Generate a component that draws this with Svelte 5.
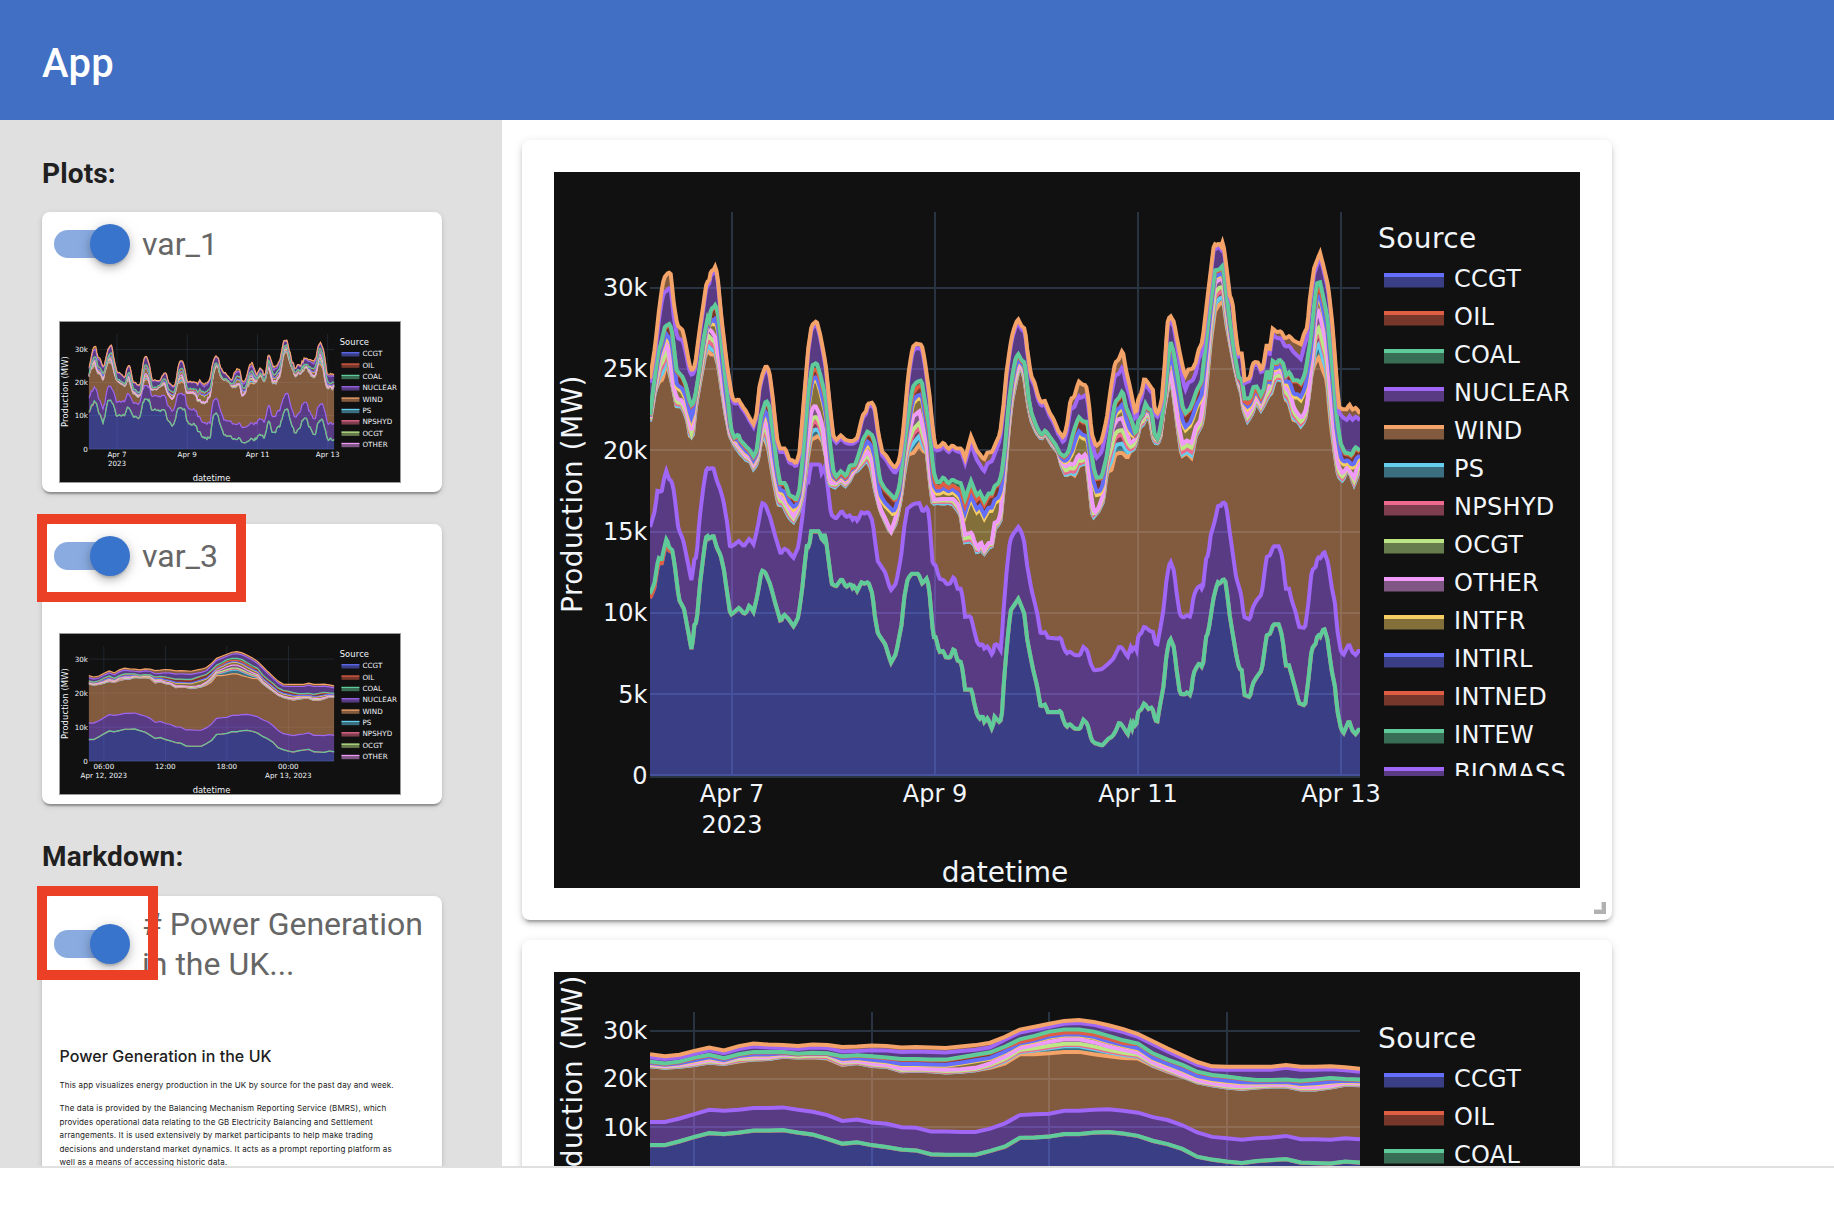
<script>
  const sources = [
    ['CCGT', '#636efa'], ['OIL', '#de5d43'], ['COAL', '#5fcb9a'], ['NUCLEAR', '#a066f5'],
    ['WIND', '#f4a369'], ['PS', '#65cdee'], ['NPSHYD', '#ed6a8f'], ['OCGT', '#bde787'],
    ['OTHER', '#f09bfa'], ['INTFR', '#f6ce64'], ['INTIRL', '#636efa'], ['INTNED', '#de5d43'],
    ['INTEW', '#5fcb9a'], ['BIOMASS', '#a066f5'], ['INTELEC', '#f4a369']
  ];

  // Parses "x,y x,y ..." into points, shifted by dx and dy.
  const seg = (text, dx = 0, dy = 0) =>
    text.trim().split(/\s+/).map((p) => {
      const [x, y] = p.split(',').map(Number);
      return [x + dx, y + dy];
    });

  function sample(points, x) {
    let i = 1;
    while (i < points.length - 1 && points[i][0] < x) i++;
    const [x0, y0] = points[i - 1];
    const [x1, y1] = points[i];
    if (x1 === x0) return y1;
    const t = Math.max(0, Math.min(1, (x - x0) / (x1 - x0)));
    return y0 + (y1 - y0) * t;
  }

  // Cumulative production curves for the week, in plot units.
  const wTotal = [
    ...seg('30,535 45,440 58,320 68,250 75,228 86,216 93,222 100,300 112,375 128,390 135,420 148,492 156,512 165,495 180,380 200,245 207,242 213,212 220,210 227,196 234,240 245,360 262,500 276,590 285,603 295,597 310,622 318,632 330,655 341,672 350,640 358,560 368,520 378,495 388,512 398,590 412,720 420,745 436,745 448,778 458,780 468,790 478,760 490,620 505,440 515,375 530,362 540,400 557,490 570,620 580,705 588,720 603,705 615,718 628,722 640,722 652,712 668,645 680,630 683,610 697,607 705,625 715,700 727,755 738,765 752,788 765,803 778,780 790,690 805,520 818,440 828,430 845,433 853,470 868,580 880,700 887,740 900,738 910,726 925,747 937,735 950,745 965,745 975,775 993,708 1010,750 1022,765 1032,778 1042,757 1056,755 1068,728'),
    ...seg('0,700 10,620 20,510 35,410 45,375 54,356 65,378 75,385 82,450 93,525 103,545 115,590 124,607 134,600 150,640 160,655 175,692 190,712 200,680 212,595 222,592 236,543 248,553 258,555 266,600 275,700 288,738 305,722 320,655 333,560 345,487 355,480 368,448 378,510 390,560 400,610 408,645 415,595 425,575 433,533 442,545 452,560 460,570 464,630 474,640 485,600 495,480 503,365 510,345 522,365 530,410 545,485 555,528 565,508 578,505 588,485 595,450 607,425 618,330 630,230 642,130 650,135 657,128 662,140 669,122 678,190 690,290 697,300 705,385 715,460 727,460 733,540 750,533 758,490 765,485 775,487 785,512 793,480 800,430 808,455 818,385 830,395 843,393 855,415 868,407 880,420 893,427 903,432 912,400 922,380 930,290 942,205 960,157 970,195 985,260 997,370 1007,500 1017,620 1028,627 1040,627 1048,612 1057,628 1068,622 1080,640', 1080)
  ];
  const wIntew = [
    ...seg('30,645 38,580 55,450 63,430 75,378 90,370 97,400 110,510 128,530 138,555 148,600 156,617 165,590 175,530 190,420 203,352 208,362 213,325 220,322 227,312 235,345 248,460 262,580 272,680 282,712 295,702 300,718 318,738 330,750 341,768 350,750 362,650 378,600 388,615 398,690 412,800 420,848 436,848 448,885 460,890 468,900 478,870 490,750 505,570 517,495 530,487 540,520 557,590 570,730 580,810 588,830 603,812 618,828 630,795 645,795 660,750 670,715 683,693 697,705 705,730 720,840 735,865 750,880 765,897 778,860 790,760 805,640 818,560 830,545 845,540 853,590 868,680 880,810 890,845 900,845 910,830 925,850 937,837 950,845 963,848 975,895 993,842 1010,885 1020,875 1033,903 1045,880 1055,880 1065,855 1075,850'),
    ...seg('2,830 5,820 15,740 25,620 35,540 45,480 54,460 65,480 75,487 85,590 95,640 110,680 124,705 136,690 150,710 165,730 180,760 193,768 205,755 215,715 225,680 236,650 248,662 262,665 270,720 280,800 290,832 305,830 320,770 333,680 345,605 357,592 368,570 378,620 395,660 408,705 415,660 430,640 435,607 445,625 455,630 463,700 474,718 485,660 495,580 505,470 511,422 520,450 535,540 548,620 556,638 570,625 580,600 590,570 605,542 615,450 630,320 645,210 657,208 669,195 680,290 692,380 705,470 716,530 727,540 733,595 750,595 760,560 770,558 783,585 793,560 800,510 810,540 818,482 830,490 838,477 850,490 858,525 868,515 880,540 893,540 903,548 915,520 930,430 943,310 950,250 960,245 970,290 982,350 997,500 1010,650 1022,730 1035,757 1050,760 1055,765 1065,740 1080,750', 1080)
  ];
  const wOther = [
    ...seg('30,655 45,560 60,475 70,455 80,425 90,480 100,560 112,598 125,602 138,625 148,665 156,700 165,600 178,530 190,450 203,385 215,395 227,415 240,500 255,610 270,700 283,725 300,745 318,768 330,775 341,795 352,770 365,690 375,660 385,700 400,800 418,890 430,898 447,925 460,950 475,920 488,860 500,740 515,630 525,617 535,635 548,680 560,780 572,850 588,850 603,838 618,850 630,830 645,810 660,785 683,755 695,775 707,860 720,925 735,955 753,995 768,950 780,890 795,760 810,690 820,650 838,635 850,690 862,740 872,840 882,900 910,898 940,898 955,915 965,945 975,1005 995,998 1005,1030 1015,1045 1022,1025 1033,1050 1045,1030 1055,1030 1063,970 1075,965'),
    ...seg('2,935 12,820 25,680 35,580 45,530 55,500 65,500 75,520 85,600 95,650 110,690 124,710 136,697 155,725 175,755 185,790 198,800 210,792 222,795 235,765 245,775 257,762 265,800 275,900 283,940 295,925 308,890 318,790 328,740 340,680 352,660 367,655 378,690 390,730 400,725 408,710 418,665 432,650 440,640 452,645 462,705 472,720 482,700 495,600 505,530 513,520 523,580 535,670 548,735 560,722 575,730 588,680 600,665 608,620 620,500 633,350 645,250 657,240 670,240 680,330 692,420 705,500 718,550 725,570 730,615 743,645 758,620 768,590 783,615 795,580 808,560 818,525 835,515 848,520 858,565 870,580 882,625 895,645 905,655 918,630 928,560 938,450 948,350 957,335 967,380 980,440 993,600 1005,730 1015,800 1028,822 1042,802 1050,815 1062,835 1072,800 1080,785', 1080)
  ];
  const wWind = [
    ...seg('30,665 45,575 58,545 68,540 78,490 88,520 98,560 110,620 125,620 140,655 150,710 158,712 168,620 180,550 195,470 203,450 213,465 225,465 235,500 245,570 258,650 270,710 283,735 300,760 318,780 330,785 341,808 352,790 362,730 372,710 385,750 400,840 415,915 430,918 445,950 460,968 475,940 488,890 500,800 512,720 525,715 535,708 548,725 558,770 568,855 585,863 603,845 615,860 628,845 640,820 655,810 668,795 680,780 692,805 705,870 720,930 735,965 752,1000 768,970 782,900 795,810 803,765 820,760 838,735 850,755 860,758 870,850 878,912 895,910 910,912 925,910 940,915 955,935 963,950 973,1028 990,1025 1003,1035 1012,1060 1022,1045 1032,1063 1045,1045 1055,1040 1065,985 1075,975'),
    ...seg('2,960 15,830 25,700 35,610 45,560 55,515 65,510 72,530 85,620 95,665 110,700 124,718 136,702 155,735 175,760 185,800 198,828 212,820 225,828 235,800 248,793 260,790 268,860 278,955 295,935 310,905 320,820 335,810 345,765 357,760 368,760 382,775 390,755 400,750 408,730 420,680 430,675 437,655 450,660 460,720 470,733 480,720 490,640 505,560 515,545 525,620 535,700 545,770 560,760 575,775 587,710 600,685 608,670 620,560 633,420 645,335 657,315 670,305 680,380 692,440 705,510 718,565 724,580 730,630 743,665 758,640 768,605 783,632 795,610 805,590 815,580 825,540 840,540 850,545 855,600 865,605 880,660 893,665 903,680 915,660 925,600 935,520 945,490 957,472 968,510 980,540 993,680 1005,770 1015,830 1028,843 1040,815 1050,820 1062,855 1072,830 1080,800', 1080)
  ];
  const wNuclear = [
    ...seg('30,980 45,930 52,872 65,875 72,835 80,808 85,835 95,842 103,880 115,985 130,1020 140,1070 150,1120 157,1152 160,1080 170,1070 178,960 190,860 200,802 208,806 220,802 230,840 240,865 250,900 262,970 270,1040 283,1033 296,1022 312,1038 328,1015 341,1032 352,985 366,908 375,912 390,950 405,1005 422,1062 432,1045 443,1050 460,1073 475,1040 487,950 498,842 505,845 512,793 540,793 545,820 555,798 562,850 573,943 588,955 605,932 618,950 630,945 638,958 645,950 652,962 665,935 672,940 685,935 697,960 705,1020 713,1082 735,1115 752,1170 768,1150 783,1070 793,980 802,925 815,915 823,910 838,908 848,935 863,918 870,980 878,1090 887,1095 898,1135 912,1140 920,1152 930,1150'),
    ...seg('12,168 22,205 33,205 40,240 43,290 62,288 70,320 82,368 90,375 97,370 103,385 113,378 127,405 135,370 143,375 153,392 160,280 170,150 180,60 190,40 205,20 212,30 222,60 232,140 245,210 262,280 272,340 287,335 292,352 325,355 332,350 340,380 350,400 358,393 375,405 390,405 400,380 412,390 422,430 432,450 455,447 475,430 490,415 508,378 518,385 533,410 542,380 548,392 553,375 560,390 565,345 573,340 583,318 600,332 610,335 615,368 622,372 630,330 640,270 650,175 660,120 672,150 680,220 690,285 700,292 710,285 722,290 730,230 740,205 750,195 758,210 768,115 775,105 782,45 795,0 805,-47 812,-42 819,-55 828,-48 840,40 858,170 873,220 882,290 900,298 908,262 920,240 935,222 943,160 950,110 960,105 970,78 987,78 997,110 1007,205 1017,205 1025,240 1037,275 1047,320 1065,323 1075,250 1085,150 1097,140 1103,110 1112,115 1122,92 1135,130 1145,200 1155,250 1162,330 1172,390 1180,405 1197,370 1207,395 1218,405 1225,392 1230,392', 930, 960)
  ];
  const wCoal = [
    ...seg('330,220 343,190 355,112 365,118 372,85 380,52 387,80 397,90 405,140 417,238 432,265 442,320 456,395 462,315 470,305 480,190 492,90 500,42 508,55 520,45 530,80 542,105 552,150 562,220 571,283 583,275 597,262 612,280 620,275 628,255 641,275 652,225 665,150 675,155 690,190 705,245 722,305 732,282 745,295 761,318 775,290 787,200 800,78 808,80 812,33 838,33 848,65 855,35 862,90 875,190 888,198 905,175 918,200 932,190 940,207 943,195 951,212 965,185 972,190 985,185 997,220 1005,290 1014,340 1035,370 1053,427 1068,400 1085,310 1093,230 1103,175 1115,160 1135,160 1147,190 1162,172 1170,230 1180,350 1187,350 1198,395 1210,392 1217,410 1230,412', -300, 960),
    ...seg('12,382 22,420 33,425 40,460 43,507 65,508 72,545 82,585 90,595 97,585 103,605 113,592 127,628 133,588 148,605 155,595 162,480 172,360 182,270 192,255 205,235 215,260 223,280 232,360 250,450 262,500 272,558 287,552 292,575 325,575 332,570 340,600 350,620 358,610 375,625 390,625 400,598 412,610 425,660 435,668 457,675 475,655 487,648 498,630 508,605 520,620 533,642 542,610 547,625 552,603 558,622 565,572 573,568 583,548 597,568 603,560 610,570 615,600 622,603 630,555 640,500 650,400 660,352 672,380 680,450 690,520 705,522 712,515 722,525 730,460 740,440 748,428 758,442 768,350 775,335 790,235 803,185 810,190 820,175 827,185 840,290 858,400 868,445 877,450 882,523 900,530 908,490 920,470 935,450 950,345 960,340 970,312 987,312 997,350 1007,435 1017,435 1035,500 1047,548 1065,555 1075,480 1085,385 1097,370 1103,342 1110,350 1122,322 1132,355 1145,450 1155,500 1162,570 1172,620 1180,640 1197,600 1207,630 1218,642 1225,628 1230,628', 930, 960)
  ];
  const wOil = seg('30,14 60,14 90,10 100,1 2160,1');
  const wBiomass = seg('30,12 60,30 80,50 125,32 156,14 227,10 300,8 455,10 700,8 765,16 950,8 975,14 1033,36 1070,22 1100,10 1260,10 1300,30 1320,46 1345,20 1370,36 1410,28 1448,50 1480,20 1560,10 1600,15 1636,42 1685,26 1720,10 1860,8 1885,14 1930,22 1985,45 2010,20 2040,12 2090,12 2125,35 2140,30 2160,20');
  // How far the Dutch interconnector reaches below the INTEW curve.
  const wNed = seg('30,4 480,4 505,12 527,20 550,10 580,4 600,12 620,14 650,5 790,5 825,20 850,12 880,18 975,20 1040,10 1070,4 1790,4 1810,22 1860,14 1880,4 2010,4 2036,24 2060,4 2160,4');

  // Lowest to highest cumulative curve for one instant, in thousands of MW.
  function stack({ coal, oil, nuclear, wind, other, intew, biomass, total, ned, psShare, cap }, unit) {
    const g = Math.max(0, other - wind);
    const extra = Math.max(0, g - 25 * unit);
    const ps = wind + psShare * extra;
    const hydro = ps + Math.max(0, 0.62 - psShare) * extra + Math.min(0.35 * g, 5 * unit);
    const ocgt = Math.min(hydro + Math.min(0.3 * g, 14 * unit), wind + g);
    const span = Math.max(0, intew - other);
    const irl = intew - Math.min(0.5 * span, cap * unit);
    const fr = irl - Math.min(0.35 * (irl - other), 10 * unit);
    const dutch = intew - Math.min(0.6 * (intew - irl), ned * unit);
    return [oil, oil, coal, nuclear, wind, ps, hydro, ocgt, other, fr, irl, dutch, intew, biomass, total];
  }

  const K = 48.8;
  const weekRows = Array.from({ length: 481 }, (_, i) => {
    const x = 30 + (i / 480) * 2130;
    const v = (points) => (1727 - sample(points, x)) / K;
    const total = v(wTotal);
    const coal = v(wCoal);
    return stack({
      coal, oil: coal - sample(wOil, x) / K, nuclear: v(wNuclear), wind: v(wWind) + 2 / K,
      other: v(wOther) + 2 / K, intew: v(wIntew), biomass: total - sample(wBiomass, x) / K, total,
      ned: sample(wNed, x), psShare: 0.35, cap: 42
    }, 1 / K);
  });

  const nums = (text) => text.split(' ').map(Number);
  const dTotal = nums('25.2 24.8 25.1 25.9 26.6 26 26.9 27.4 27.2 27.1 26.9 27.2 27.1 26.7 26.8 27 26.9 26.6 26.7 26.6 26.5 26.8 27.1 27.6 28.8 30.3 30.9 31.5 32.1 32.3 31.9 31.2 30.4 29.4 27.9 26.4 25 23.6 22.7 22.6 22.6 22.6 22.6 23 22.6 22.6 22.7 22.5 22.2');
  const dIntew = nums('23.7 23.3 23.7 24.5 25.1 24.4 25.2 25.7 25.7 25.7 25.3 25.5 25.4 24.8 25 24.8 24.5 24.2 24.2 24.1 24.1 24.6 25.1 25.6 26.8 28.3 29 29.9 30.3 30.3 29.9 29 28.1 27.4 25.4 24.1 23 21.6 20.9 20.6 20.2 19.9 19.9 20 19.7 20 20.3 20.1 20');
  const dOther = nums('23 22.8 23 23.4 24 23.4 24.5 24.6 24.6 25.1 25 25.2 25.1 23.7 23.5 23.3 23 22.2 22.2 22.1 22 22.1 22.4 23.3 24.7 26.5 27.1 27.8 28.3 28.3 27.7 26.8 26.1 25.5 23.5 22.3 20.9 19.7 19.1 18.8 18.6 18.8 18.8 18.8 18.4 18.4 18.7 19.1 18.9');
  const dWind = nums('22.7 22.4 22.6 23 23.5 23.2 23.7 24.1 24.2 24.7 24.5 24.6 24.3 23 23.4 22.8 22.6 21.7 21.8 21.7 21.4 21.6 21.9 22.4 23.3 25.2 25.2 25.4 25.7 25.7 25.2 24.8 24.4 24.3 22.8 21.6 20.6 19.4 18.8 18.3 18 18.3 18.5 18.5 17.9 17.9 18.3 18.9 18.8');
  const dNuclear = nums('11.2 11.2 11.9 12.8 13.7 13.5 13.7 14.1 14.1 14.2 13.7 13.3 12.6 11.4 11.7 11.1 10.8 10.1 10 9.2 9.2 9.1 9.1 9.8 10.9 12.6 12.8 12.9 13.5 13.5 13.7 13.8 13.5 13.1 12.2 11.6 10.5 9 8.1 7.8 7.5 7.8 8 8.3 7.6 7.6 7.5 7.8 7.6');
  const dCoal = nums('6.4 6.4 7.2 8.1 8.9 8.7 9 9.4 9.4 9.5 9 8.6 7.7 6.7 7 6.4 6 5.5 5.3 4.5 4.4 4.4 4.4 5.2 6.1 7.9 8 8.2 8.7 8.7 9 9.1 8.8 8.3 7.3 6.6 5.6 4 3.4 3 2.7 3.1 3.3 3.5 2.8 2.7 2.6 3 2.8');
  const dayRows = dTotal.map((total, i) => {
    const peak = i > 24 && i < 33;
    return stack({
      coal: dCoal[i], oil: dCoal[i] - 0.05, nuclear: dNuclear[i], wind: dWind[i],
      other: Math.max(dOther[i], dWind[i] + 0.4), intew: dIntew[i],
      biomass: total - (i > 12 && i < 24 ? 0.95 : 0.6), total,
      ned: peak ? 28 : 6, psShare: 0.55, cap: 55
    }, 1 / 48);
  });

  const week = {
    rows: weekRows, range: 34.67,
    xTicks: [[0.1155, 'Apr 7', '2023'], [0.4014, 'Apr 9'], [0.6873, 'Apr 11'], [0.9732, 'Apr 13']]
  };
  const day = {
    rows: dayRows, range: 33.95,
    xTicks: [[0.062, '06:00', 'Apr 12, 2023'], [0.312, '12:00'], [0.5625, '18:00'], [0.8126, '00:00', 'Apr 13, 2023']]
  };

  function build(data, width, height, step) {
    const w = width - 316;
    const h = height - 152;
    const n = data.rows.length - 1;
    const px = (i) => ((i / n) * w).toFixed(1);
    const py = (v) => (h - (v / data.range) * h).toFixed(1);
    const curves = sources.map((_, s) => data.rows.map((r, i) => `${px(i)},${py(r[s])}`));
    const layers = sources.map(([, color], s) => ({
      color,
      line: 'M' + curves[s].join('L'),
      area: 'M' + curves[s].join('L') + 'L' + (s ? [...curves[s - 1]].reverse().join('L') : `${w},${h}L0,${h}`) + 'Z'
    }));
    const yTicks = [];
    for (let v = 0; v <= 30; v += step) yTicks.push([v ? `${v}k` : '0', +py(v)]);
    return {
      width, height, w, h, layers, yTicks,
      xTicks: data.xTicks.map(([f, a, b]) => [Math.round(f * w), a, b]),
      legend: sources.slice(0, Math.ceil((h - 50) / 38))
    };
  }

  const bigWeek = build(week, 1026, 716, 5);
  const bigDay = build(day, 1026, 316, 10);
  const smallWeek = build(week, 1139, 538, 10);
  const smallDay = build(day, 1139, 538, 10);
</script>

{#snippet chart(c)}
  <svg class="chart" viewBox="0 0 {c.width} {c.height}">
    <rect width={c.width} height={c.height} fill="#111" />
    <svg x="96" y="40" width={c.w} height={c.h + 2}>
      {#each c.xTicks as [x]}
        <rect class="grid" x={x - 1} y="0" width="2" height={c.h} />
      {/each}
      {#each c.yTicks as [label, y]}
        <rect class="grid" x="0" y={label === '0' ? y - 2 : Math.floor(y) - 1} width={c.w} height={label === '0' ? 4 : 2} />
      {/each}
      {#each c.layers as l}
        <path d={l.area} fill={l.color} fill-opacity="0.5" />
      {/each}
      {#each c.layers as l}
        <path d={l.line} fill="none" stroke={l.color} stroke-width="4" />
      {/each}
    </svg>
    {#each c.yTicks as [label, y]}
      <text class="tick" x="93.5" y={y + 48} text-anchor="end">{label}</text>
    {/each}
    {#each c.xTicks as [x, first, second]}
      <text class="tick" x={x + 96} y={c.h + 65.5} text-anchor="middle">{first}</text>
      {#if second}
        <text class="tick" x={x + 96} y={c.h + 96.5} text-anchor="middle">{second}</text>
      {/if}
    {/each}
    <text class="title" x={96 + c.w / 2} y={c.h + 145.5} text-anchor="middle">datetime</text>
    <text class="title spaced" transform="translate(28 {40 + c.h / 2}) rotate(-90)" text-anchor="middle">Production (MW)</text>
    <svg x={c.w + 110} y="40" width="206" height={c.h}>
      <text class="title spaced" x="4" y="35.5">Source</text>
      {#each c.legend as [name, color], i}
        <rect x="10" y={i * 38 + 61} width="60" height="14.5" fill={color} fill-opacity="0.5" />
        <rect x="10" y={i * 38 + 61} width="60" height="4" fill={color} />
        <text class="tick name" x="80" y={i * 38 + 74.5}>{name}</text>
      {/each}
    </svg>
  </svg>
{/snippet}

{#snippet toggle()}
  <span class="switch"><span class="track"></span><span class="knob"></span></span>
{/snippet}

<div class="app">
  <header>App</header>
  <div class="body">
    <aside>
      <h3>Plots:</h3>
      <section class="card">
        <div class="head">{@render toggle()}<span class="label">var_1</span></div>
        <div class="thumb">{@render chart(smallWeek)}</div>
      </section>
      <section class="card">
        <div class="head">{@render toggle()}<span class="label">var_3</span></div>
        <div class="thumb">{@render chart(smallDay)}</div>
        <div class="mark wide"></div>
      </section>
      <h3 class="second">Markdown:</h3>
      <section class="card tall">
        <div class="head two">{@render toggle()}<span class="label">&#35; Power Generation<br />in the UK...</span></div>
        <article>
          <h4>Power Generation in the UK</h4>
          <p>This app visualizes energy production in the UK by source for the past day and week.</p>
          <p>
            The data is provided by the Balancing Mechanism Reporting Service (BMRS), which<br />
            provides operational data relating to the GB Electricity Balancing and Settlement<br />
            arrangements. It is used extensively by market participants to help make trading<br />
            decisions and understand market dynamics. It acts as a prompt reporting platform as<br />
            well as a means of accessing historic data.
          </p>
        </article>
        <div class="mark narrow"></div>
      </section>
    </aside>
    <main>
      <section class="panel">
        {@render chart(bigWeek)}
        <svg class="grip" viewBox="0 0 12 12"><path d="M7 0h1v8H0v-1h7z" fill="#ddd" /><path d="M8 0h4v12H0V8h8z" fill="#b1b1b1" /></svg>
      </section>
      <section class="panel">{@render chart(bigDay)}</section>
    </main>
  </div>
</div>

<style>
  :global(body) {
    background: #fff;
  }
  .app {
    height: 1226px;
    overflow: hidden;
    font-family: Roboto, 'Liberation Sans', sans-serif;
  }
  header {
    height: 120px;
    box-sizing: border-box;
    padding: 0 42px;
    background: #406fc3;
    color: #fff;
    font-size: 40px;
    font-weight: 500;
    line-height: 128px;
    letter-spacing: 0.3px;
  }
  .body {
    display: flex;
    height: 1046px;
    overflow: hidden;
    border-bottom: 2px solid #e0e0e0;
  }
  aside {
    flex: 0 0 502px;
    box-sizing: border-box;
    padding: 33px 60px 0 42px;
    background: #e0e0e0;
  }
  h3 {
    margin: 0 0 17px;
    font-size: 28px;
    font-weight: 700;
    line-height: 42px;
    letter-spacing: 0.15px;
    color: #202020;
  }
  h3.second {
    margin-top: 32px;
    margin-bottom: 18px;
  }
  .card {
    position: relative;
    height: 280px;
    box-sizing: border-box;
    padding: 8px 12px 0;
    margin-bottom: 32px;
    border-radius: 8px;
    background: #fff;
    box-shadow: 0 4px 2px -2px rgba(0, 0, 0, 0.2), 0 2px 2px rgba(0, 0, 0, 0.14), 0 2px 6px rgba(0, 0, 0, 0.12);
  }
  .card.tall {
    height: 420px;
  }
  .head {
    display: flex;
    align-items: center;
    height: 48px;
  }
  .head.two {
    height: 80px;
  }
  .label {
    padding-left: 12px;
    font-size: 32px;
    line-height: 40px;
    color: #666;
    white-space: nowrap;
  }
  .switch {
    position: relative;
    flex: 0 0 76px;
    height: 40px;
    display: flex;
    align-items: center;
  }
  .track {
    width: 68px;
    height: 28px;
    border-radius: 14px;
    background: #89abe0;
  }
  .knob {
    position: absolute;
    right: 0;
    top: 0;
    width: 40px;
    height: 40px;
    border-radius: 50%;
    background: #3873cc;
    box-shadow: 0 4px 2px -2px rgba(0, 0, 0, 0.15), 0 4px 8px rgba(0, 0, 0, 0.2), 0 2px 16px rgba(0, 0, 0, 0.12);
  }
  .thumb {
    box-sizing: border-box;
    width: 342px;
    height: 162px;
    margin: 53px 0 0 5px;
    border: 1px solid #999;
    overflow: hidden;
  }
  .chart {
    display: block;
    width: 100%;
    font-family: 'DejaVu Sans', Verdana, sans-serif;
    fill: #f2f5fa;
  }
  .grid {
    fill: #283442;
  }
  .tick {
    font-size: 24px;
  }
  .title {
    font-size: 28px;
  }
  .name {
    letter-spacing: 0.3px;
  }
  .spaced {
    letter-spacing: 0.42px;
  }
  .mark {
    position: absolute;
    left: -5px;
    top: -10px;
    box-sizing: border-box;
    border: 10px solid #eb4026;
  }
  .wide {
    width: 209px;
    height: 88px;
  }
  .narrow {
    width: 121px;
    height: 94px;
  }
  article {
    padding: 62px 0 0 5.5px;
    font-family: Inter, sans-serif;
    color: #202020;
    white-space: nowrap;
  }
  h4 {
    margin: 0 0 13px;
    font-size: 16px;
    font-weight: 500;
    line-height: 20px;
    letter-spacing: 0.06px;
  }
  p {
    margin: 0 0 9.5px;
    font-size: 8px;
    line-height: 13.5px;
    letter-spacing: 0.14px;
  }
  main {
    flex: 1;
    padding: 20px 0 0 20px;
  }
  .panel {
    position: relative;
    box-sizing: border-box;
    width: 1090px;
    padding: 32px;
    margin-bottom: 20px;
    border-radius: 8px;
    background: #fff;
    box-shadow: 0 6px 2px -4px rgba(0, 0, 0, 0.2), 0 4px 4px rgba(0, 0, 0, 0.14), 0 2px 10px rgba(0, 0, 0, 0.12);
  }
  .grip {
    position: absolute;
    right: 6px;
    bottom: 6px;
    width: 12px;
    height: 12px;
  }
</style>
